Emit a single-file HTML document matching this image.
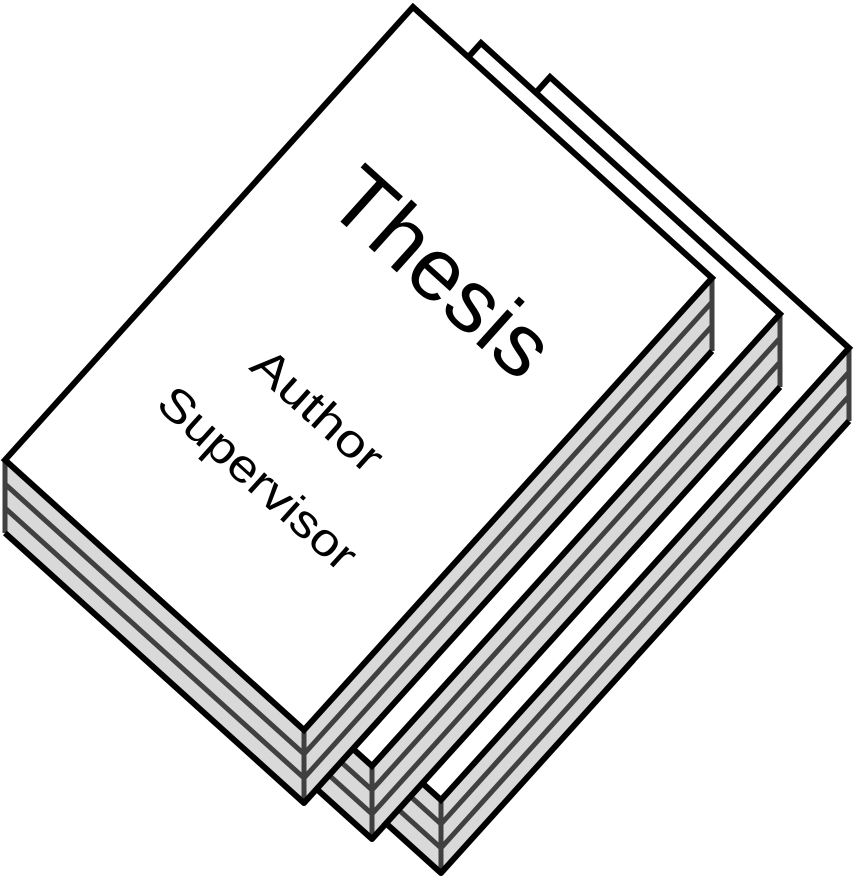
<!DOCTYPE html>
<html><head><style>html,body{margin:0;padding:0;background:#fff;}svg{display:block}</style></head><body>
<svg width="856" height="881" viewBox="0 0 856 881" xmlns="http://www.w3.org/2000/svg">
<defs>
<g id="book">
  <polygon points="5,460 304,730 304,803 5,533" fill="#d9d9d9"/>
  <polygon points="304,730 712,278 712,351 304,803" fill="#d9d9d9"/>
  <g stroke="#404040" stroke-width="5" fill="none">
    <polyline points="5,484 304,754 712,302"/>
    <polyline points="5,508 304,778 712,326"/>
    <line x1="5" y1="460" x2="5" y2="533"/>
    <line x1="304" y1="730" x2="304" y2="803"/>
    <line x1="712" y1="278" x2="712" y2="351"/>
  </g>
  <polyline points="5,533 304,803 712,351" fill="none" stroke="#000" stroke-width="6" stroke-linejoin="round"/>
  <polygon points="413,7 712,278 304,730 5,460" fill="#fff" stroke="#000" stroke-width="6" stroke-linejoin="miter"/>
</g>
</defs>
<use href="#book" transform="translate(137,70)"/>
<use href="#book" transform="translate(68,36)"/>
<use href="#book"/>
<g font-family="Liberation Sans, sans-serif" fill="#000" text-anchor="middle" dominant-baseline="central">
<text transform="translate(442,272) rotate(42)" font-size="88" textLength="265" lengthAdjust="spacingAndGlyphs">Thesis</text>
<text transform="translate(318,410) rotate(42)" font-size="46" textLength="160" lengthAdjust="spacingAndGlyphs">Author</text>
<text transform="translate(258,478) rotate(42)" font-size="46" textLength="250" lengthAdjust="spacingAndGlyphs">Supervisor</text>
</g>
</svg>
</body></html>
